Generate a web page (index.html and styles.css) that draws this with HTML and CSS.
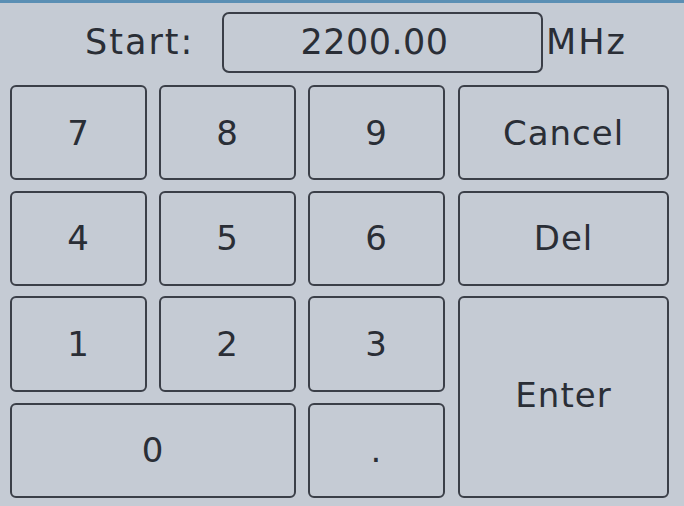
FILE: index.html
```html
<!DOCTYPE html>
<html>
<head>
<meta charset="utf-8">
<link rel="stylesheet" href="styles.css">
</head>
<body>
<div class="screen">
  <div class="header">
    <span class="label">Start:</span>
    <div class="field">2200.00</div>
    <span class="unit">MHz</span>
  </div>
  <div class="pad">
    <div class="key">7</div>
    <div class="key">8</div>
    <div class="key">9</div>
    <div class="key">Cancel</div>
    <div class="key">4</div>
    <div class="key">5</div>
    <div class="key">6</div>
    <div class="key">Del</div>
    <div class="key">1</div>
    <div class="key">2</div>
    <div class="key">3</div>
    <div class="key enter">Enter</div>
    <div class="key zero">0</div>
    <div class="key">.</div>
  </div>
</div>
</body>
</html>
```
FILE: styles.css
```css
html, body {
  margin: 0;
  padding: 0;
  background: #c5cbd4;
}
.screen {
  width: 684px;
  height: 506px;
  box-sizing: border-box;
  border-top: 3px solid #5b8fb4;
  font-family: "DejaVu Sans", sans-serif;
  color: #2a2e36;
  overflow: hidden;
}
.header {
  display: flex;
  align-items: center;
  height: 82px;
  padding-left: 85px;
  box-sizing: border-box;
  padding-bottom: 4px;
}
.label {
  font-size: 35px;
  letter-spacing: 2px;
  width: 137px;
}
.field {
  width: 321px;
  height: 61px;
  box-sizing: border-box;
  border: 2px solid #3a3e47;
  border-radius: 7px;
  display: flex;
  align-items: center;
  justify-content: center;
  font-size: 35px;
  letter-spacing: 0.5px;
  padding-right: 16px;
}
.unit {
  margin-left: 3px;
  font-size: 35px;
  letter-spacing: 2px;
}
.pad {
  display: grid;
  grid-template-columns: 137px 137px 137px 212px;
  grid-template-rows: 95px 95px 96px 95px;
  column-gap: 12px;
  row-gap: 10.5px;
  padding-left: 10px;
}
.pad .key:nth-child(4n) {
  margin-left: 1px;
}
.key {
  box-sizing: border-box;
  border: 2px solid #3b3f48;
  border-radius: 6px;
  display: flex;
  align-items: center;
  justify-content: center;
  font-size: 34px;
  letter-spacing: 1px;
}
.enter {
  grid-column: 4;
  grid-row: 3 / span 2;
  padding-bottom: 4px;
}
.zero {
  grid-column: 1 / span 2;
}
```
